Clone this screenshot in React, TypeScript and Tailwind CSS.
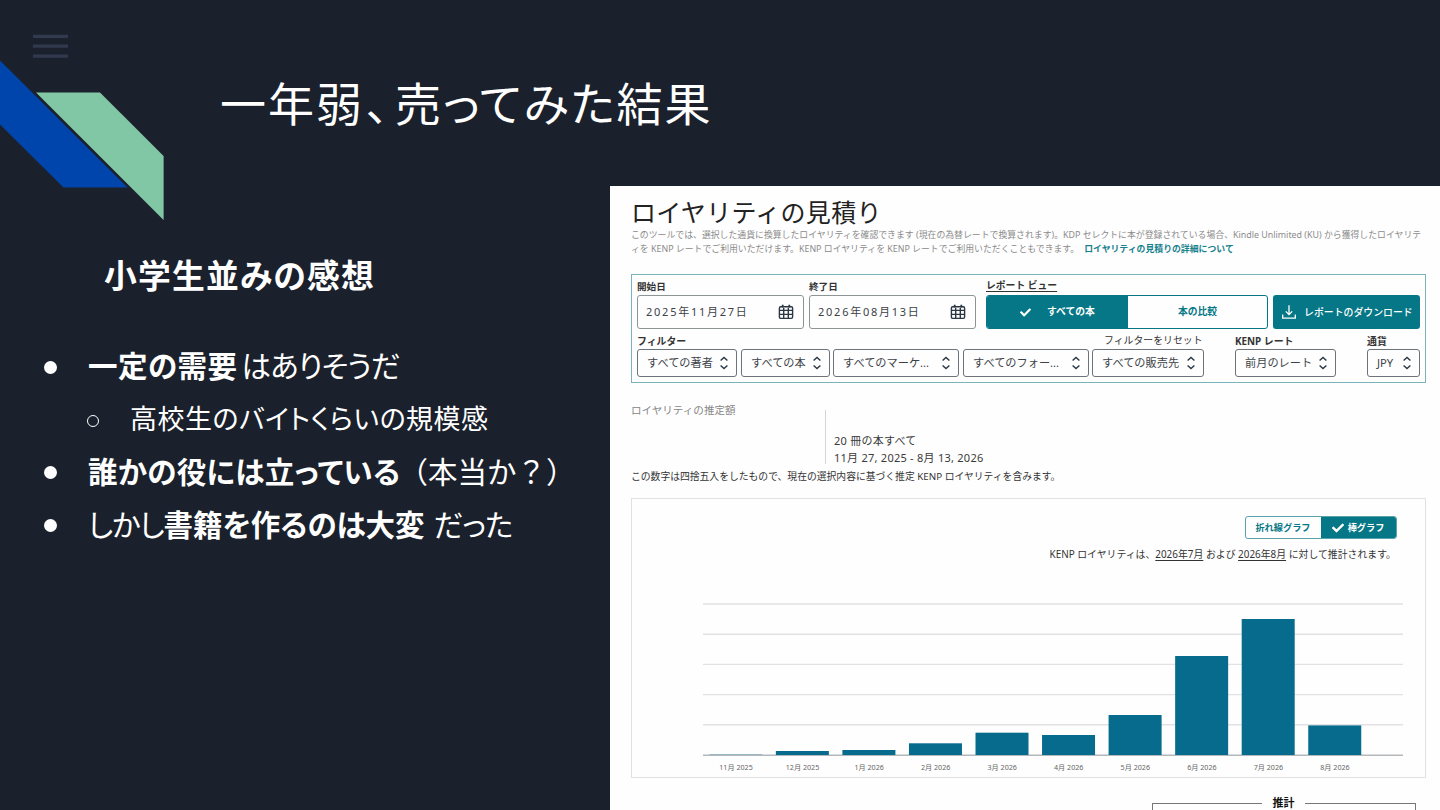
import React from 'react';
import { FaCheck } from 'react-icons/fa';

const MONTHS = [
  { label: '11月 2025', value: 0.3 },
  { label: '12月 2025', value: 4 },
  { label: '1月 2026', value: 5 },
  { label: '2月 2026', value: 11.7 },
  { label: '3月 2026', value: 22.3 },
  { label: '4月 2026', value: 20 },
  { label: '5月 2026', value: 40 },
  { label: '6月 2026', value: 99 },
  { label: '7月 2026', value: 136 },
  { label: '8月 2026', value: 29.6 },
];

const GRID_LINES = [0, 30.2, 60.4, 90.6, 120.8];

const Ribbon: React.FC = () => (
  <svg className="absolute left-0 top-0" width="180" height="240" viewBox="0 0 180 240">
    <path d="M33 36.3h35M33 46.2h35M33 56.1h35" stroke="#30394d" strokeWidth="3.2" />
    <path d="M0 60.5 127.5 187.6H63.5L0 124.5Z" fill="#0045ac" />
    <path d="M36 92.5H100L163.6 156V220Z" fill="#81c7a5" />
  </svg>
);

const CalendarIcon: React.FC = () => (
  <svg className="mr-px" width="16" height="16" viewBox="0 0 16 16" fill="none" stroke="#2b3743" strokeWidth="1.4">
    <rect x="1.4" y="2.8" width="13.2" height="11.6" rx="1.3" />
    <path d="M1.2 6.4h13.6M1.2 10.4h13.6M5.7 4v10.6M10.3 4v10.6" />
    <path d="M4.7 .8v2.6M11.3 .8v2.6" strokeWidth="1.8" />
  </svg>
);

const SortIcon: React.FC = () => (
  <svg width="10" height="14" viewBox="0 0 10 14" fill="none" stroke="#2b3743" strokeWidth="1.4">
    <path d="M1.6 4.6 5 1.4l3.4 3.2M1.6 9.4 5 12.6l3.4-3.2" />
  </svg>
);

const DownloadIcon: React.FC = () => (
  <svg width="14" height="14" viewBox="0 0 14 14" fill="none" stroke="white" strokeWidth="1.3">
    <path d="M7 .3v9M3.8 6.4 7 9.6l3.2-3.2M.7 9.6v3.6h12.6V9.6" />
  </svg>
);

const DateField: React.FC<{ label: string; value: string }> = ({ label, value }) => (
  <div className="w-[167px]">
    <div className="h-5 leading-[23px] text-[9.6px] font-bold text-[#333]">{label}</div>
    <div className="flex h-[34px] items-center justify-between rounded-[3px] border border-[#8d9496] pl-2 pr-2">
      <span className="pt-px text-[11px] tracking-[1.75px] text-[#3c4248]">{value}</span>
      <CalendarIcon />
    </div>
  </div>
);

const Select: React.FC<{ className: string; children: React.ReactNode }> = ({ className, children }) => (
  <div className={`flex h-[28px] items-center justify-between rounded-[3px] border border-[#6c7479] pl-[9px] pr-[7px] text-[11.2px] text-[#3c4248] ${className}`}>
    <span>{children}</span>
    <SortIcon />
  </div>
);

const Filters: React.FC = () => (
  <div className="h-[109px] w-[795px] border border-[#7ab3b9] pl-[5px] pr-1">
    <div className="flex">
      <DateField label="開始日" value="2025年11月27日" />
      <div className="w-[5px]" />
      <DateField label="終了日" value="2026年08月13日" />
      <div className="ml-[10px] w-[282px]">
        <div className="h-5 text-[9.8px] leading-[21px] font-bold text-[#333]">
          <span className="underline underline-offset-2">レポート ビュー</span>
        </div>
        <div className="flex h-[34px] overflow-hidden rounded-[3px] border border-[#057786] text-[9.8px] font-bold">
          <div className="flex w-[141px] items-center bg-[#057786] pl-[33px] text-white">
            <FaCheck size={11} />
            <span className="ml-4">すべての本</span>
          </div>
          <div className="flex flex-1 items-center justify-center text-[#057786]">本の比較</div>
        </div>
      </div>
      <div className="mt-5 ml-[5px] flex h-[34px] w-[147px] items-center rounded-[3px] bg-[#057786] pl-[9px] text-[9.9px] font-medium text-white">
        <DownloadIcon />
        <span className="ml-2">レポートのダウンロード</span>
      </div>
    </div>
    <div className="flex h-5 items-center text-[9.9px] leading-[19px] text-[#333]">
      <span className="w-[467px] pt-[4px] font-bold">フィルター</span>
      <span className="w-[131px] pt-0.5">フィルターをリセット</span>
      <span className="w-[132px] pt-[4px] font-bold">KENP レート</span>
      <span className="pt-[4px] font-bold">通貨</span>
    </div>
    <div className="flex">
      <Select className="w-[100px]">すべての著者</Select>
      <Select className="ml-1 w-[89px]">すべての本</Select>
      <Select className="ml-[3px] w-[126px]">すべてのマーケ...</Select>
      <Select className="ml-[4px] w-[126px]">すべてのフォー...</Select>
      <Select className="ml-[3px] w-[112px]">すべての販売先</Select>
      <Select className="ml-[31px] w-[101px]">前月のレート</Select>
      <Select className="ml-[31px] w-[53px]">JPY</Select>
    </div>
  </div>
);

const BarChart: React.FC = () => (
  <svg width="793" height="190" viewBox="0 0 793 190">
    {GRID_LINES.map((y) => (
      <path key={y} d={`M71 ${17 + y}h700`} stroke="#e1e2e4" strokeWidth="1.4" />
    ))}
    <path d="M71 168.2h700" stroke="#b4b8bb" strokeWidth="1.4" />
    {MONTHS.map((month, i) => (
      <g key={month.label}>
        <rect x={77.3 + i * 66.55} y={168 - month.value} width="53" height={month.value} fill="#076b8d" />
        <text x={104 + i * 66.55} y="183" textAnchor="middle" fontSize="7.15" fill="#666">
          {month.label}
        </text>
      </g>
    ))}
  </svg>
);

const RoyaltyReport: React.FC = () => (
  <section className="h-[624px] w-[830px] overflow-hidden whitespace-nowrap bg-[#fefefe] pl-[21px] [font-family:'Noto_Sans','Noto_Sans_CJK_JP',sans-serif]">
    <h2 className="mt-[11px] h-[31px] text-[25px] leading-[31px] tracking-[0.3px] text-[#222]">ロイヤリティの見積り</h2>
    <div className="h-[46px] text-[8.87px] leading-[14px] text-[#8b8b8b]">
      <p>
        このツールでは、選択した通貨に換算したロイヤリティを確認できます (現在の為替レートで換算されます)。KDP セレクトに本が登録されている場合、Kindle Unlimited (KU) から獲得したロイヤリテ
      </p>
      <p>
        ィを KENP レートでご利用いただけます。KENP ロイヤリティを KENP レートでご利用いただくこともできます。
        <a className="ml-[5px] font-bold text-[#17818d]">ロイヤリティの見積りの詳細について</a>
      </p>
    </div>
    <Filters />

    <div className="mt-[19px] flex h-[62px]">
      <div className="w-[194px] text-[10.55px] leading-[17px] text-[#868686]">ロイヤリティの推定額</div>
      <div className="mt-2 w-[200px] border-l border-[#d5d5d5] pt-[22px] pl-2 text-[11px] leading-[17px] tracking-[0.25px] text-[#3a3a3a]">
        <p>20 冊の本すべて</p>
        <p>11月 27, 2025 - 8月 13, 2026</p>
      </div>
    </div>
    <p className="h-[34px] pt-[4px] text-[9.8px] leading-[18px] text-[#333]">
      この数字は四捨五入をしたもので、現在の選択内容に基づく推定 KENP ロイヤリティを含みます。
    </p>

    <div className="h-[280px] w-[795px] border border-[#e1e1e1]">
      <div className="mt-[17px] mr-[28.5px] ml-auto flex h-[23px] w-[152px] overflow-hidden rounded-[3px] border border-[#5ba3ab] text-[9.2px] font-bold">
        <div className="flex w-[75px] items-center justify-center text-[#057786]">折れ線グラフ</div>
        <div className="flex flex-1 items-center justify-center gap-1 bg-[#057786] text-white">
          <FaCheck size={12} />
          棒グラフ
        </div>
      </div>
      <p className="mr-[29px] h-[48px] pt-[5px] text-right text-[9.9px] leading-[20px] text-[#333]">
        KENP ロイヤリティは、<u className="underline-offset-2">2026年7月</u> および <u className="underline-offset-2">2026年8月</u> に対して推計されます。
      </p>
      <BarChart />
    </div>

    <div className="mt-[15px] ml-[521px] flex w-[264px] items-start">
      <div className="mt-[10px] h-8 w-[110px] border-t border-l border-[#777]" />
      <div className="w-[43px] text-center text-[11px] leading-[20px] font-bold text-[#111]">推計</div>
      <div className="mt-[10px] h-8 flex-1 border-t border-r border-[#777]" />
    </div>
  </section>
);

const Impressions: React.FC = () => (
  <div className="w-[610px] whitespace-nowrap pt-[64px]">
    <h2 className="pl-[104px] text-[32.8px] leading-[48px] font-bold tracking-[1.2px]">小学生並みの感想</h2>
    <ul className="mt-10 text-[29.5px] leading-[53px]">
      <li className="flex h-[53px] items-center">
        <span className="mt-[6px] mr-[31px] ml-[44px] size-[13px] rounded-full bg-white" />
        <b className="tracking-[0.5px]">一定の需要</b>
        <span className="ml-1 tracking-[-0.9px]">はありそうだ</span>
      </li>
      <li className="flex h-[53px] items-center text-[27px]">
        <span className="mt-[6px] mr-[31px] ml-[87px] size-[12px] rounded-full border border-white" />
        <span className="tracking-[0.5px]">高校生のバイトくらいの規模感</span>
      </li>
      <li className="flex h-[53px] items-center">
        <span className="mt-[4px] mr-[31px] ml-[44px] size-[13px] rounded-full bg-white" />
        <b className="tracking-[0.3px]">誰かの役には立っている</b>
        <span className="ml-[-2px] [font-feature-settings:normal]">（本当か？）</span>
      </li>
      <li className="flex h-[53px] items-center">
        <span className="mt-[4px] mr-[31px] ml-[44px] size-[13px] rounded-full bg-white" />
        <span className="tracking-[-1px]">しかし</span>
        <b>書籍を作るのは大変</b>
        <span className="ml-[9px] tracking-[-1px]">だった</span>
      </li>
    </ul>
  </div>
);

const App: React.FC = () => (
  <main className="relative h-[810px] w-[1440px] overflow-hidden bg-[#1b212c] text-white [font-family:'Noto_Sans_CJK_JP',sans-serif] [font-feature-settings:'palt']">
    <Ribbon />
    <h1 className="h-[186px] pt-[68px] pl-[220px] text-[46px] leading-[66px] tracking-[2px]">
      一年弱<span className="mr-1 ml-0.5">、</span>売ってみた結果
    </h1>
    <div className="flex">
      <Impressions />
      <div className="[font-feature-settings:normal]">
        <RoyaltyReport />
      </div>
    </div>
  </main>
);

export default App;
